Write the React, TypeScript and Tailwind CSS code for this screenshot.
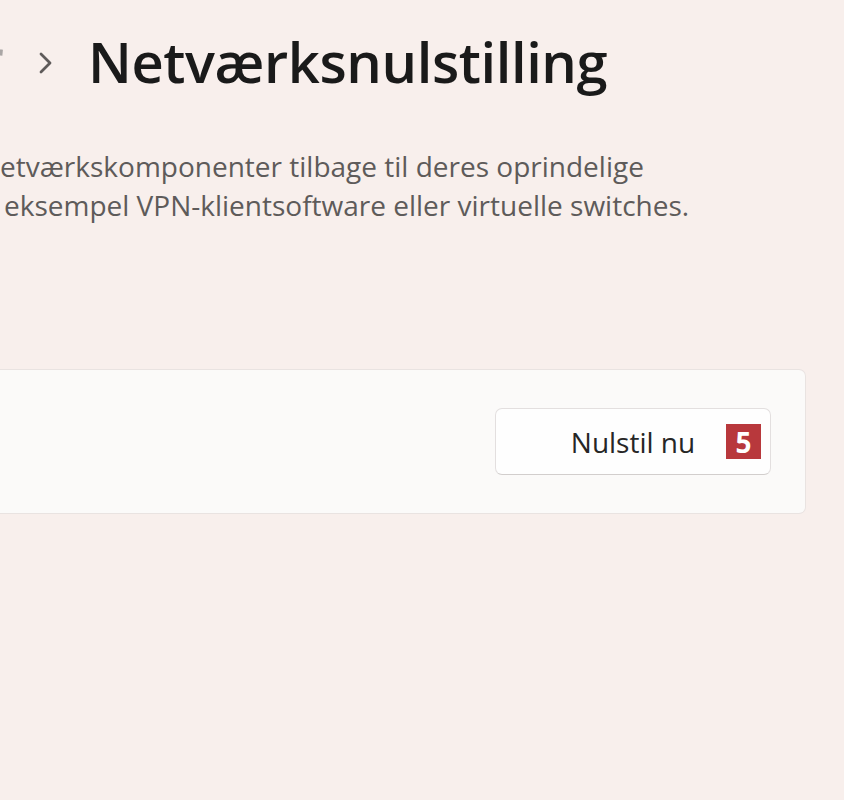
import React from "react";

export default function App() {
  return (
    <div
      className="w-[844px] h-[800px] overflow-hidden bg-[#f8efec] text-[#1b1b1b]"
      style={{ fontFamily: '"Open Sans", "Noto Sans", sans-serif' }}
    >
      {/* breadcrumb header */}
      <div className="flex items-center h-[80px] mt-[21px]">
        <div className="w-[4px] overflow-hidden flex justify-end shrink-0">
          <span className="whitespace-nowrap shrink-0 text-[56px] font-semibold text-[#aaa6a5] leading-none -mt-[6px]">
            indstillinger
          </span>
        </div>
        <svg
          className="ml-[32px] shrink-0 mt-[4px]"
          width="20"
          height="26"
          viewBox="0 0 20 26"
          fill="none"
        >
          <path
            d="M5 4 L14 13 L5 22"
            stroke="#5f5b5a"
            strokeWidth="2.8"
            strokeLinecap="round"
            strokeLinejoin="round"
          />
        </svg>
        <h1 className="ml-[32px] text-[56px] font-semibold leading-none tracking-[-0.4px] text-[#1a1a1a] whitespace-nowrap">
          Netværksnulstilling
        </h1>
      </div>

      {/* description */}
      <div className="mt-[46px] text-[28px] leading-[39px] text-[#5e5b5a] whitespace-nowrap">
        <div>etværkskomponenter tilbage til deres oprindelige</div>
        <div className="pl-[4px]">eksempel VPN-klientsoftware eller virtuelle switches.</div>
      </div>

      {/* card */}
      <div className="mt-[144px] w-[806px] h-[145px] bg-[#fbfaf9] border border-[#e9e3e1] border-l-0 rounded-r-[7px] flex items-center justify-end pr-[34px]">
        <div className="relative">
          <button className="w-[276px] h-[67px] rounded-[7px] bg-[#fefefe] border border-[#e3dfdf] border-b-[#d2cecd] text-[28px] text-[#262626] flex items-center justify-center">
            Nulstil nu
          </button>
          <div className="absolute left-[231px] top-[16px] w-[35px] h-[35px] bg-[#b8383c] text-white font-bold text-[28px] leading-none flex items-center justify-center">
            5
          </div>
        </div>
      </div>
    </div>
  );
}
